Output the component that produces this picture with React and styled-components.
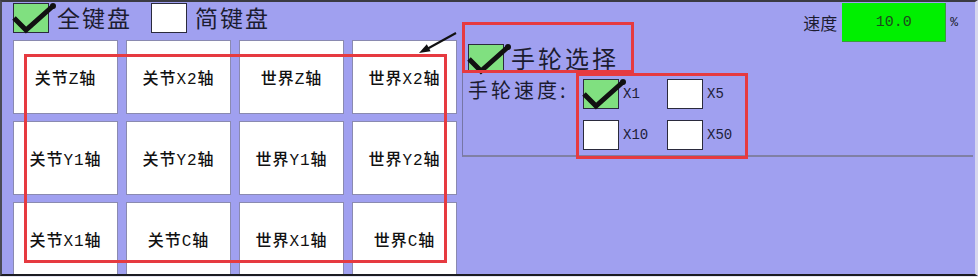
import React from "react";
import styled, { createGlobalStyle } from "styled-components";

const GlobalStyle = createGlobalStyle`
  html, body {
    margin: 0;
    padding: 0;
    background: #e6e6f2;
  }
  body {
    font-family: "Noto Sans CJK SC", sans-serif;
  }
`;

// linhas do teclado de eixos
const keys = [
  ["关节Z轴", "关节X2轴", "世界Z轴", "世界X2轴"],
  ["关节Y1轴", "关节Y2轴", "世界Y1轴", "世界Y2轴"],
  ["关节X1轴", "关节C轴", "世界X1轴", "世界C轴"],
];

const speeds = [
  { label: "X1", checked: true },
  { label: "X5", checked: false },
  { label: "X10", checked: false },
  { label: "X50", checked: false },
];

const Screen = styled.div`
  width: 978px;
  height: 277px;
  padding-bottom: 1px;
  box-sizing: border-box;
`;

const Frame = styled.div`
  position: relative;
  box-sizing: border-box;
  width: 978px;
  height: 276px;
  display: grid;
  grid-template-columns: 460px 1fr;
  background: #a0a0f0;
  border-top: 2px solid #3a3a42;
  border-left: 2px solid #4a4a56;
  border-right: 3px solid #d6d6ee;
  border-bottom: 2px solid #1c1c22;
  overflow: hidden;
`;

const LeftPane = styled.div`
  padding-left: 11px;
  display: flex;
  flex-direction: column;
`;

const ModeRow = styled.div`
  display: flex;
  align-items: flex-start;
  gap: 19px;
  height: 38px;
  padding-top: 1px;
  box-sizing: border-box;
`;

const Option = styled.label`
  display: flex;
  align-items: ${(p) => (p.$top ? "flex-start" : "center")};
`;

const Box = styled.span`
  position: relative;
  display: block;
  flex: none;
  width: ${(p) => p.$w || 36}px;
  height: ${(p) => p.$h || 30}px;
  box-sizing: border-box;
  background: ${(p) => (p.$checked ? "#80e080" : "#ffffff")};
  border: 1.5px solid #2a2a3c;
`;

const Tick = styled.svg`
  position: absolute;
  left: -2px;
  top: -2px;
  overflow: visible;
`;

const BigText = styled.span`
  margin-left: ${(p) => p.$gap || 8}px;
  font-size: ${(p) => p.$size || 23}px;
  line-height: 28px;
  letter-spacing: ${(p) => p.$spacing || 2}px;
  color: #1c1c30;
`;

const KeyGrid = styled.div`
  display: grid;
  grid-template-columns: repeat(4, 105px);
  grid-auto-rows: 74px;
  gap: 7px 8px;
`;

const Key = styled.button`
  display: flex;
  align-items: center;
  justify-content: center;
  padding: 0;
  background: #ffffff;
  border: 1px solid #8a8ab0;
  font-family: "Liberation Mono", "Noto Sans CJK SC", monospace;
  font-size: 16px;
  font-weight: 500;
  letter-spacing: 1px;
  color: #111;
`;

const RightPane = styled.div`
  display: flex;
  flex-direction: column;
`;

const SpeedRow = styled.div`
  display: flex;
  justify-content: flex-end;
  align-items: center;
  height: 40px;
  padding: 1px 17px 0 0;
  box-sizing: border-box;
`;

const SpeedLabel = styled.span`
  margin-right: 5px;
  font-size: 17px;
  color: #1c1c30;
`;

const SpeedValue = styled.div`
  width: 104px;
  height: 39px;
  box-sizing: border-box;
  display: flex;
  align-items: center;
  justify-content: center;
  background: #00f000;
  border-right: 1px solid #3c9c3c;
  border-bottom: 1px solid #3c9c3c;
  font-family: "Liberation Mono", monospace;
  font-size: 15px;
  color: #1e4a1e;
`;

const Unit = styled.span`
  margin-left: 4px;
  font-family: "Liberation Mono", monospace;
  font-size: 13px;
  color: #1c1c30;
`;

const HandPanel = styled.div`
  height: 115px;
  margin-right: 2px;
  box-sizing: border-box;
  padding: 1px 0 0 5px;
  border-left: 1px solid #7676a6;
  border-bottom: 2px solid #8080a4;
`;

const HandHeader = styled.div`
  display: flex;
  align-items: center;
  height: 30px;
`;

const HandBody = styled.div`
  display: flex;
  align-items: flex-start;
  margin-top: 6px;
`;

const HandLabel = styled.span`
  width: 115px;
  font-size: 20px;
  line-height: 22px;
  letter-spacing: 3px;
  color: #1c1c30;
`;

const SpeedGrid = styled.div`
  display: grid;
  grid-template-columns: 84px 84px;
  row-gap: 11px;
`;

const SmallText = styled.span`
  margin-left: 4px;
  font-family: "Liberation Mono", monospace;
  font-size: 14px;
  color: #20203a;
`;

const Mark = styled.div`
  position: absolute;
  left: ${(p) => p.$x}px;
  top: ${(p) => p.$y}px;
  width: ${(p) => p.$w}px;
  height: ${(p) => p.$h}px;
  box-sizing: border-box;
  border: 3px solid #e63a40;
  pointer-events: none;
`;

const Arrow = styled.svg`
  position: absolute;
  left: 416px;
  top: 30px;
  pointer-events: none;
`;

const Check = ({ checked, w, h }) => (
  <Box $checked={checked} $w={w} $h={h}>
    {checked && (
      <Tick width="44" height="32" viewBox="0 0 44 32">
        <path d="M2 16 L14 28 L41 4" fill="none" stroke="#111" strokeWidth="5" />
        <circle cx="41" cy="4" r="3" fill="#111" />
      </Tick>
    )}
  </Box>
);

export default function App() {
  return (
    <Screen>
      <GlobalStyle />
      <Frame>
        <LeftPane>
          <ModeRow>
            <Option $top>
              <Check checked />
              <BigText>全键盘</BigText>
            </Option>
            <Option $top>
              <Check />
              <BigText>简键盘</BigText>
            </Option>
          </ModeRow>
          <KeyGrid>
            {keys.flat().map((k) => (
              <Key key={k}>{k}</Key>
            ))}
          </KeyGrid>
        </LeftPane>

        <RightPane>
          <SpeedRow>
            <SpeedLabel>速度</SpeedLabel>
            <SpeedValue>10.0</SpeedValue>
            <Unit>%</Unit>
          </SpeedRow>
          <HandPanel>
            <HandHeader>
              <Check checked h={28} />
              <BigText $gap={7} $size={24} $spacing={3}>手轮选择</BigText>
            </HandHeader>
            <HandBody>
              <HandLabel>手轮速度:</HandLabel>
              <SpeedGrid>
                {speeds.map((s) => (
                  <Option key={s.label}>
                    <Check checked={s.checked} />
                    <SmallText>{s.label}</SmallText>
                  </Option>
                ))}
              </SpeedGrid>
            </HandBody>
          </HandPanel>
        </RightPane>

        {/* marcações vermelhas por cima da tela */}
        <Mark $x={22} $y={52} $w={423} $h={209} />
        <Mark $x={460} $y={20} $w={172} $h={51} />
        <Mark $x={574} $y={71} $w={172} $h={86} />
        <Arrow width="42" height="24" viewBox="0 0 42 24">
          <line x1="38" y1="1" x2="9" y2="17" stroke="#111" strokeWidth="2" />
          <polygon points="1,21 8.8,12.3 12.6,19.3" fill="#111" />
        </Arrow>
      </Frame>
    </Screen>
  );
}
